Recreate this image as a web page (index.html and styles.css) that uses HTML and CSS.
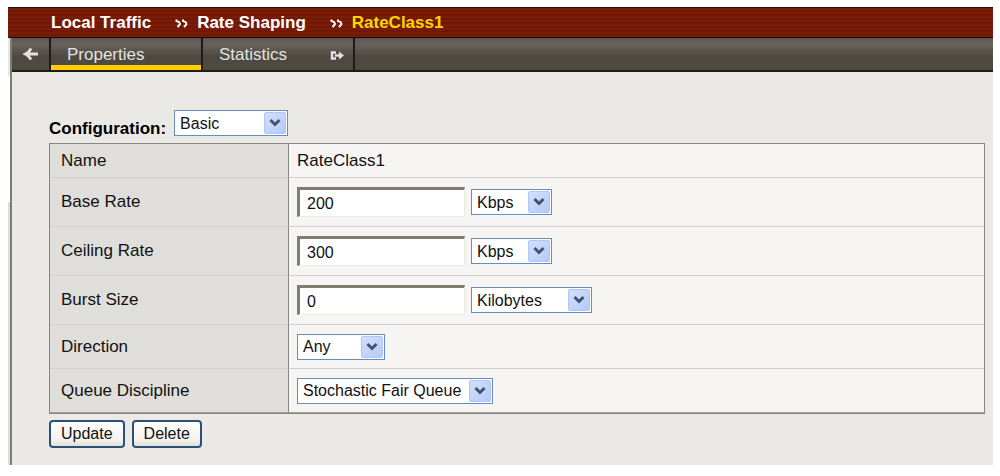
FILE: index.html
```
<!DOCTYPE html>
<html lang="en">
<head>
  <meta charset="UTF-8">
  <meta name="viewport" content="width=device-width, initial-scale=1.0">
  <title>Rate Class Properties</title>
  <link rel="stylesheet" href="styles.css">
</head>
<body>
  <svg class="symbols" aria-hidden="true">
    <symbol id="chevron" viewBox="0 0 12 10">
      <path d="M1.500 2 L6 6.500 L10.500 2" fill="none" stroke="#43526e" stroke-width="3"/>
    </symbol>
    <symbol id="crumb" viewBox="0 0 13 9">
      <path d="M1.500 0.500 V2 Q5.500 3 4.800 5.500 L2.500 8 M8 0.500 V2 Q12 3 11.300 5.500 L9 8" fill="none" stroke="#fff" stroke-width="2"/>
    </symbol>
  </svg>

  <div class="window">
    <nav class="breadcrumb">
      <a href="#">Local Traffic</a>
      <svg class="crumb-icon" aria-hidden="true"><use href="#crumb"/></svg>
      <a href="#">Rate Shaping</a>
      <svg class="crumb-icon" aria-hidden="true"><use href="#crumb"/></svg>
      <a href="#" class="current">RateClass1</a>
    </nav>

    <div class="frame">
      <div class="side"></div>
      <div class="main">
        <nav class="tabs">
          <a href="#" class="back" aria-label="Back">
            <svg width="16" height="14" viewBox="0 0 16 14">
              <path d="M8 1.500 Q6.500 5 2.500 7 Q6.500 9 8 12.500 M3 7 H15" fill="none" stroke="#e4e2e0" stroke-width="3"/>
            </svg>
          </a>
          <a href="#" class="tab active">Properties</a>
          <a href="#" class="tab">Statistics
            <svg width="14" height="9" viewBox="0 0 14 9">
              <path d="M6 1.500 H2 V7.500 H6 M5 4.500 H12" fill="none" stroke="#e4e2e0" stroke-width="2.500"/>
              <path d="M9 0.500 L14 4.500 L9 8.500 Z" fill="#e4e2e0"/>
            </svg>
          </a>
        </nav>

        <form class="content">
          <div class="config">
            <label for="config">Configuration:</label>
            <span class="select w-basic">
              <select id="config"><option>Basic</option><option>Advanced</option></select>
              <span class="arrow"><svg><use href="#chevron"/></svg></span>
            </span>
          </div>

          <table>
            <tr class="row-name">
              <th scope="row">Name</th>
              <td>RateClass1</td>
            </tr>
            <tr class="row-input">
              <th scope="row"><label for="base">Base Rate</label></th>
              <td>
                <div class="field">
                  <input type="text" id="base" value="200">
                  <span class="select w-kbps">
                    <select aria-label="Base rate unit"><option>Kbps</option><option>Mbps</option></select>
                    <span class="arrow"><svg><use href="#chevron"/></svg></span>
                  </span>
                </div>
              </td>
            </tr>
            <tr class="row-input">
              <th scope="row"><label for="ceiling">Ceiling Rate</label></th>
              <td>
                <div class="field">
                  <input type="text" id="ceiling" value="300">
                  <span class="select w-kbps">
                    <select aria-label="Ceiling rate unit"><option>Kbps</option><option>Mbps</option></select>
                    <span class="arrow"><svg><use href="#chevron"/></svg></span>
                  </span>
                </div>
              </td>
            </tr>
            <tr class="row-input">
              <th scope="row"><label for="burst">Burst Size</label></th>
              <td>
                <div class="field">
                  <input type="text" id="burst" value="0">
                  <span class="select w-kilo">
                    <select aria-label="Burst size unit"><option>Kilobytes</option><option>Megabytes</option></select>
                    <span class="arrow"><svg><use href="#chevron"/></svg></span>
                  </span>
                </div>
              </td>
            </tr>
            <tr class="row-select">
              <th scope="row"><label for="direction">Direction</label></th>
              <td>
                <div class="field">
                  <span class="select w-any">
                    <select id="direction"><option>Any</option></select>
                    <span class="arrow"><svg><use href="#chevron"/></svg></span>
                  </span>
                </div>
              </td>
            </tr>
            <tr class="row-select">
              <th scope="row"><label for="queue">Queue Discipline</label></th>
              <td>
                <div class="field">
                  <span class="select w-queue">
                    <select id="queue"><option>Stochastic Fair Queue</option></select>
                    <span class="arrow"><svg><use href="#chevron"/></svg></span>
                  </span>
                </div>
              </td>
            </tr>
          </table>

          <div class="buttons">
            <button type="button">Update</button>
            <button type="button">Delete</button>
          </div>
        </form>
      </div>
    </div>
  </div>
</body>
</html>
```
FILE: styles.css
```
* {
  box-sizing: border-box;
}

body {
  margin: 0;
  padding: 7px 7px 0 8px;
  background-color: #fff;
  color: #111;
  font-family: "Liberation Sans", Arial, sans-serif;
  font-size: 17px;
  line-height: 20px;
}

a {
  text-decoration: none;
}

.symbols {
  display: none;
}

/* breadcrumb bar */
.breadcrumb {
  display: flex;
  align-items: center;
  height: 31px;
  padding-left: 43px;
  border-top: 1px solid #1c1512;
  border-bottom: 1px solid #1c0a06;
  background: repeating-linear-gradient(#7a1c08 0, #7a1c08 2px, #701705 2px, #701705 4px);
  font-weight: bold;
}

.breadcrumb a {
  color: #fff;
}

.breadcrumb a.current {
  color: #f8d800;
}

.crumb-icon {
  width: 13px;
  height: 9px;
  margin: 2px 9px 0 24px;
}

.frame {
  display: flex;
}

/* edge of the left menu */
.side {
  width: 2px;
  background: linear-gradient(#e6e6e2 38px, #fff 38px, #fff 164px, #dcdcd8 164px);
}

.main {
  flex: 1;
  border-left: 2px solid #7c7c78;
  background-color: #eae9e5;
}

/* tabs */
.tabs {
  display: flex;
  height: 34px;
  border-bottom: 2px solid #1e1c18;
  background: linear-gradient(#5c5650 0, #6a625c 6px, #4e4a42 18px, #4e4a42 100%);
}

.tabs a {
  display: flex;
  align-items: center;
  border-right: 2px solid #1e1c18;
  color: #e4e2e0;
}

.back {
  justify-content: center;
  width: 39px;
}

.tab {
  justify-content: space-between;
  width: 152px;
  padding: 2px 9px 0 16px;
}

.tab.active {
  box-shadow: inset 0 -5px #ffcc00;
}

/* form */
.content {
  padding: 38px 8px 17px 37px;
}

.config {
  display: flex;
  align-items: flex-end;
  gap: 8px;
  margin-bottom: 7px;
  color: #000;
  font-weight: bold;
}

.config label {
  line-height: 14px;
}

table {
  width: 100%;
  border: 1px solid #868682;
  border-collapse: separate;
  border-spacing: 0;
  background-color: #f6f5f3;
}

th,
td {
  padding: 0 8px;
  border-bottom: 1px solid #cfcfcc;
  text-align: left;
  font-weight: normal;
}

th {
  width: 239px;
  padding-left: 11px;
  border-right: 1px solid #868682;
  background-color: #dfdeda;
}

tr:last-child th,
tr:last-child td {
  border-bottom: 1px solid #a0a09c;
}

.row-name {
  height: 34px;
}

.row-input {
  height: 49px;
}

.row-select {
  height: 44px;
}

.field {
  display: flex;
  align-items: center;
  gap: 6px;
}

input {
  width: 168px;
  height: 30px;
  padding: 2px 7px 0;
  border: 1px solid #ecebdc;
  border-top: 3px solid #827c70;
  border-left: 3px solid #827c70;
  background-color: #fff;
  color: #111;
  font-family: inherit;
  font-size: 16px;
}

.select {
  position: relative;
  height: 26px;
}

select {
  display: block;
  width: 100%;
  height: 26px;
  padding: 0 24px 0 5px;
  border: 1px solid #6a8cb8;
  border-radius: 0;
  background-color: #fff;
  color: #111;
  font-family: inherit;
  font-size: 16px;
  appearance: none;
}

.arrow {
  position: absolute;
  top: 2px;
  right: 2px;
  display: flex;
  align-items: center;
  justify-content: center;
  width: 22px;
  height: 22px;
  border: 1px solid #b0c6f4;
  border-radius: 2px;
  background: linear-gradient(135deg, #d4e0fc, #b2cafa);
  pointer-events: none;
}

.arrow svg {
  width: 12px;
  height: 10px;
}

.w-basic {
  width: 114px;
}

.w-kbps {
  width: 81px;
}

.w-kilo {
  width: 121px;
}

.w-any {
  width: 88px;
}

.w-queue {
  width: 196px;
}

.buttons {
  display: flex;
  gap: 7px;
  margin-top: 6px;
}

button {
  height: 28px;
  padding: 0 10px;
  border: 2px solid #2c5078;
  border-radius: 4px;
  background: linear-gradient(#fff, #f4f3ee 70%, #e2dfd6);
  color: #111;
  font-family: inherit;
  font-size: 16px;
}
```
